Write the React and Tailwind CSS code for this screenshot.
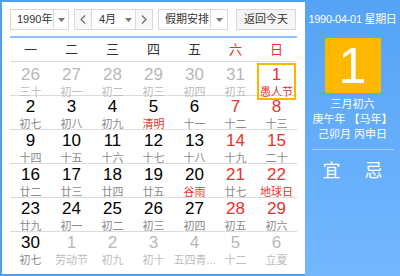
import React from 'react';

const font = { fontFamily: '"Liberation Sans", "Noto Sans CJK SC", sans-serif' };

const weekDays = ['一', '二', '三', '四', '五', '六', '日'];

// kind: o = other month, n = normal, w = weekend
const rows = [
  [['26', '三十', 'o'], ['27', '初一', 'o'], ['28', '初二', 'o'], ['29', '初三', 'o'], ['30', '初四', 'o'], ['31', '初五', 'o'], ['1', '愚人节', 'w', true, true]],
  [['2', '初七', 'n'], ['3', '初八', 'n'], ['4', '初九', 'n'], ['5', '清明', 'n', true], ['6', '十一', 'n'], ['7', '十二', 'w'], ['8', '十三', 'w']],
  [['9', '十四', 'n'], ['10', '十五', 'n'], ['11', '十六', 'n'], ['12', '十七', 'n'], ['13', '十八', 'n'], ['14', '十九', 'w'], ['15', '二十', 'w']],
  [['16', '廿二', 'n'], ['17', '廿三', 'n'], ['18', '廿四', 'n'], ['19', '廿五', 'n'], ['20', '谷雨', 'n', true], ['21', '廿七', 'w'], ['22', '地球日', 'w', true]],
  [['23', '廿九', 'n'], ['24', '初一', 'n'], ['25', '初二', 'n'], ['26', '初三', 'n'], ['27', '初四', 'n'], ['28', '初五', 'w'], ['29', '初六', 'w']],
  [['30', '初七', 'n'], ['1', '劳动节', 'o'], ['2', '初九', 'o'], ['3', '初十', 'o'], ['4', '五四青...', 'o'], ['5', '十二', 'o'], ['6', '立夏', 'o']],
];

const Caret = () => (
  <svg width="7" height="4" viewBox="0 0 7 4"><path d="M0 0h7L3.5 4z" fill="#777" /></svg>
);

const Cell = ({ num, lunar, kind, festival, selected }) => {
  const numColor = kind === 'o' ? 'text-[#b8b8b8]' : kind === 'w' ? 'text-[#e8322d]' : 'text-black';
  const lunarColor = kind === 'o' ? 'text-[#bcbcbc]' : festival ? 'text-[#e8322d]' : 'text-[#8a8a8a]';
  return (
    <div className="flex h-full items-center justify-center p-px">
      <div className={`flex h-full w-full flex-col items-center justify-center ${selected ? 'border-2 border-[#ffb400]' : ''}`}>
        <span className={`text-[17px] leading-[19px] ${numColor}`}>{num}</span>
        <span className={`mt-[2px] text-[11px] leading-[12px] whitespace-nowrap ${lunarColor}`}>{lunar}</span>
      </div>
    </div>
  );
};

export default function App() {
  return (
    <div className="flex h-[276px] w-[400px] overflow-hidden bg-white" style={font}>
      {/* Calendar */}
      <div className="flex h-full w-[305px] shrink-0 flex-col border-2 border-r-0 border-[#4f9ff2] px-[8px] pt-[7px]">
        <div className="flex h-[21px] items-stretch text-[11px] whitespace-nowrap text-[#333]">
          <div className="flex w-[59px] items-center border border-[#d9d9d9]">
            <span className="flex-1 pl-[6px]">1990年</span>
            <span className="flex h-full w-[15px] shrink-0 items-center justify-center border-l border-[#dcdcdc]"><Caret /></span>
          </div>
          <div className="ml-[5px] flex w-[79px] items-center border border-[#d9d9d9]">
            <span className="flex h-full w-[17px] shrink-0 items-center justify-center border-r border-[#dcdcdc] bg-[#f7f7f7]">
              <svg width="6" height="9" viewBox="0 0 6 9"><path d="M5 0.5L1 4.5l4 4" stroke="#666" strokeWidth="1.1" fill="none" /></svg>
            </span>
            <span className="flex-1 pl-[7px]">4月</span>
            <span className="flex h-full w-[14px] shrink-0 items-center justify-center"><Caret /></span>
            <span className="flex h-full w-[17px] shrink-0 items-center justify-center border-l border-[#dcdcdc] bg-[#f7f7f7]">
              <svg width="6" height="9" viewBox="0 0 6 9"><path d="M1 0.5l4 4-4 4" stroke="#666" strokeWidth="1.1" fill="none" /></svg>
            </span>
          </div>
          <div className="ml-[5px] flex w-[70px] items-center border border-[#d9d9d9]">
            <span className="flex-1 pl-[6px]">假期安排</span>
            <span className="flex h-full w-[17px] shrink-0 items-center justify-center border-l border-[#dcdcdc]"><Caret /></span>
          </div>
          <div className="ml-[8px] flex w-[60px] items-center justify-center border border-[#d9d9d9] bg-[#f5f5f5]">
            返回今天
          </div>
        </div>
        <div className="mt-[6px] h-[2px] bg-[#8cc2f7]" />
        <div className="grid h-[24px] grid-cols-7 border-b border-[#dcdcdc] text-[13px]">
          {weekDays.map((d, i) => (
            <div key={d} className={`flex items-center justify-center ${i >= 5 ? 'text-[#e8322d]' : 'text-[#333]'}`}>{d}</div>
          ))}
        </div>
        <div className="flex flex-col">
          {rows.map((row, ri) => (
            <div key={ri} className={`grid h-[34px] grid-cols-7 ${ri < 5 ? 'border-b border-[#dcdcdc]' : ''}`}>
              {row.map(([num, lunar, kind, festival, selected], ci) => (
                <Cell key={ci} num={num} lunar={lunar} kind={kind} festival={festival} selected={selected} />
              ))}
            </div>
          ))}
        </div>
      </div>

      {/* Detail panel */}
      <div className="flex h-full flex-1 flex-col items-center bg-gradient-to-b from-[#55a3f5] to-[#73b7ff] text-white">
        <div className="mt-[12px] text-[11px] leading-[14px] tracking-[-0.3px] whitespace-nowrap">1990-04-01 星期日</div>
        <div className="mt-[12px] flex h-[55px] w-[56px] items-center justify-center rounded-[2px] bg-[#ffb800] text-[50px] leading-none">1</div>
        <div className="mt-[4px] text-[11px] leading-[15px] whitespace-nowrap">三月初六</div>
        <div className="text-[11px] leading-[15px] whitespace-nowrap">庚午年 【马年】</div>
        <div className="text-[11px] leading-[15px] whitespace-nowrap">己卯月 丙申日</div>
        <div className="mt-[7px] h-px w-[82px] bg-[#a6d0fb]" />
        <div className="mt-[10px] flex w-[60px] justify-between text-[18px] leading-[22px]">
          <span>宜</span>
          <span>忌</span>
        </div>
      </div>
    </div>
  );
}
